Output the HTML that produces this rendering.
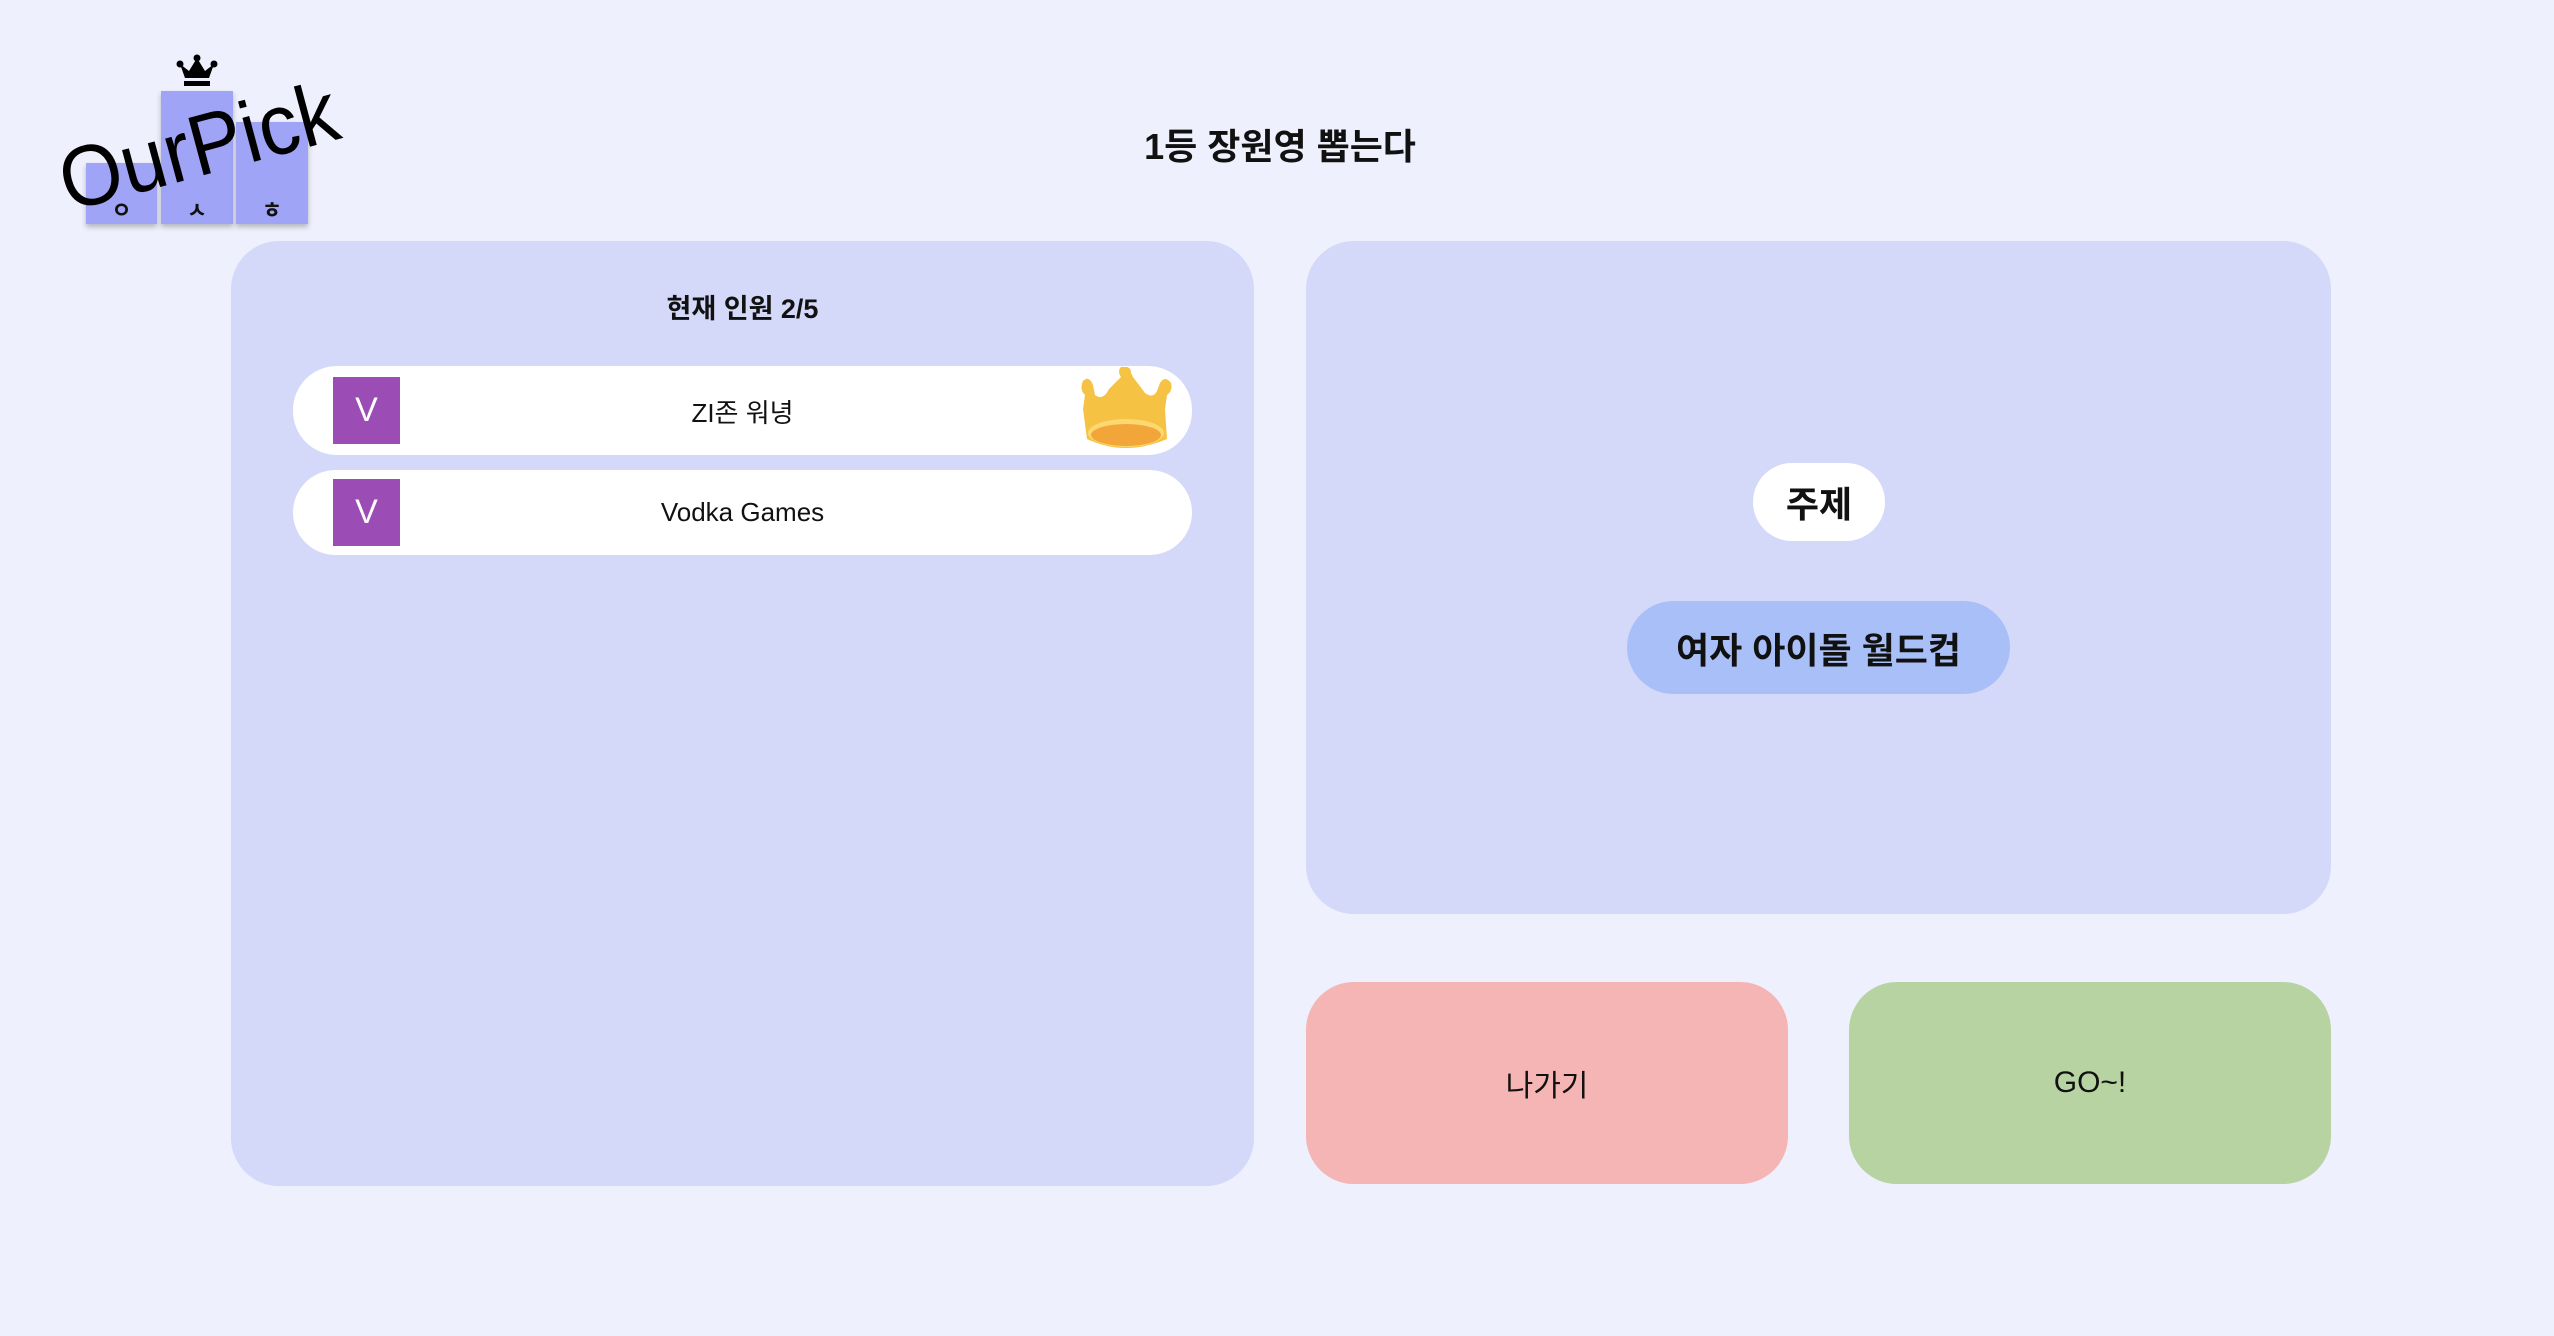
<!DOCTYPE html>
<html><head><meta charset="utf-8"><style>
*{margin:0;padding:0;box-sizing:border-box}
body{width:2554px;height:1336px;background:#eef0fd;font-family:"Liberation Sans","Noto Sans CJK KR",sans-serif;position:relative;overflow:hidden}
.abs{position:absolute}
.panel{position:absolute;background:#d4d9fa;border-radius:48px}
.row{position:absolute;left:293px;width:899px;background:#fff;border-radius:44px}
.av{position:absolute;left:40px;top:11px;width:67px;height:67px;background:#9c4db5;color:#fff;font-size:34px;display:flex;align-items:center;justify-content:center}
.nm{position:absolute;left:0;right:0;text-align:center;font-size:26px;color:#111}
.btn{position:absolute;top:982px;width:482px;height:202px;border-radius:48px;display:flex;align-items:center;justify-content:center;font-size:30px;color:#111}
.box{position:absolute;background:#a0a4f6;box-shadow:0 3px 5px rgba(0,0,0,.25)}
.kl{position:absolute;font-size:22px;font-weight:bold;color:#111;width:100%;text-align:center}
</style></head><body>
<!-- logo -->
<div class="box" style="left:86px;top:163px;width:71px;height:61px"><div class="kl" style="top:30px">ㅇ</div></div>
<div class="box" style="left:161px;top:91px;width:72px;height:133px"><div class="kl" style="top:102px">ㅅ</div></div>
<div class="box" style="left:236px;top:122px;width:72px;height:102px"><div class="kl" style="top:71px">ㅎ</div></div>
<svg class="abs" style="left:176px;top:54px" width="42" height="34" viewBox="0 0 42 34"><circle cx="4" cy="10" r="3.5"/><circle cx="21" cy="4" r="3.5"/><circle cx="38" cy="10" r="3.5"/><path d="M4 10 L9 24 H33 L38 10 L29 17 L21 4 L13 17 Z"/><rect x="8" y="27" width="26" height="5"/></svg>
<div class="abs" style="left:72px;top:140px;height:84px;line-height:84px;font-size:86px;color:#000;transform:rotate(-15deg) scaleX(0.93);transform-origin:0 100%;letter-spacing:0;white-space:nowrap">OurPick</div>

<div class="abs" style="left:0;width:2560px;top:118px;text-align:center;font-size:36px;font-weight:bold;color:#111">1등 장원영 뽑는다</div>

<div class="panel" style="left:231px;top:241px;width:1023px;height:945px"></div>
<div class="abs" style="left:231px;width:1023px;top:287px;text-align:center;font-size:27px;font-weight:bold;color:#111">현재 인원 2/5</div>
<div class="row" style="top:366px;height:89px"><div class="av">V</div><div class="nm" style="top:27px">ZI존 워녕</div>
<svg class="abs" style="left:782px;top:1px" width="103" height="82" viewBox="0 0 103 82"><path d="M8 42 L10 28 Q4 22 8 14 Q14 8 18 18 L20 28 Q28 34 34 22 L46 10 Q42 4 46 0 Q56 -2 56 6 L58 10 L70 26 Q78 32 82 24 L85 16 Q90 8 96 16 Q98 24 92 28 L90 42 L92 72 Q50 90 12 72 Z" fill="#f6c244"/><ellipse cx="51" cy="66" rx="38" ry="14" fill="#fbd970"/><ellipse cx="51" cy="68" rx="35" ry="11" fill="#f2a63a"/></svg></div>
<div class="row" style="top:470px;height:85px"><div class="av" style="top:9px">V</div><div class="nm" style="top:27px">Vodka Games</div></div>

<div class="panel" style="left:1306px;top:241px;width:1025px;height:673px"></div>
<div class="abs" style="left:1753px;top:463px;width:132px;height:78px;background:#fff;border-radius:39px;display:flex;align-items:center;justify-content:center;font-size:36px;font-weight:bold;color:#111">주제</div>
<div class="abs" style="left:1627px;top:601px;width:383px;height:93px;background:#a9bff7;border-radius:47px;display:flex;align-items:center;justify-content:center;font-size:36px;font-weight:bold;color:#111">여자 아이돌 월드컵</div>

<div class="btn" style="left:1306px;background:#f4b5b4">나가기</div>
<div class="btn" style="left:1849px;background:#b7d3a2">GO~!</div>
</body></html>
